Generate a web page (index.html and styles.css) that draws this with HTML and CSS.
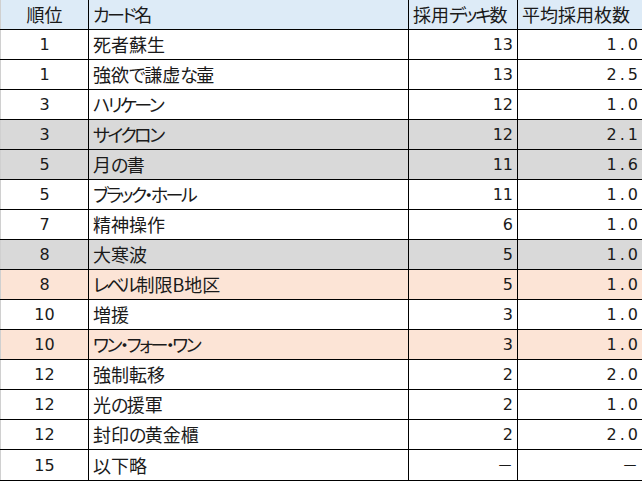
FILE: index.html
```html
<!DOCTYPE html>
<html lang="ja">
<head>
<meta charset="utf-8">
<link rel="stylesheet" href="styles.css">
</head>
<body>
<table class="rank">
  <colgroup>
    <col class="c-rank">
    <col class="c-name">
    <col class="c-deck">
    <col class="c-avg">
  </colgroup>
  <thead>
    <tr class="head">
      <th class="center">順位</th>
      <th><span class="kana">カード</span>名</th>
      <th>採用<span class="kana">デッキ</span>数</th>
      <th>平均採用枚数</th>
    </tr>
  </thead>
  <tbody>
    <tr><td class="center">1</td><td>死者蘇生</td><td class="num">13</td><td class="num avg">1.0</td></tr>
    <tr><td class="center">1</td><td>強欲<span class="hira">で</span>謙虚<span class="hira">な</span>壷</td><td class="num">13</td><td class="num avg">2.5</td></tr>
    <tr><td class="center">3</td><td><span class="kana">ハリケーン</span></td><td class="num">12</td><td class="num avg">1.0</td></tr>
    <tr class="gray"><td class="center">3</td><td><span class="kana">サイクロン</span></td><td class="num">12</td><td class="num avg">2.1</td></tr>
    <tr class="gray"><td class="center">5</td><td>月<span class="hira">の</span>書</td><td class="num">11</td><td class="num avg">1.6</td></tr>
    <tr><td class="center">5</td><td><span class="kana">ブラック・ホール</span></td><td class="num">11</td><td class="num avg">1.0</td></tr>
    <tr><td class="center">7</td><td>精神操作</td><td class="num">6</td><td class="num avg">1.0</td></tr>
    <tr class="gray"><td class="center">8</td><td>大寒波</td><td class="num">5</td><td class="num avg">1.0</td></tr>
    <tr class="peach"><td class="center">8</td><td><span class="kana">レベル</span>制限B地区</td><td class="num">5</td><td class="num avg">1.0</td></tr>
    <tr><td class="center">10</td><td>増援</td><td class="num">3</td><td class="num avg">1.0</td></tr>
    <tr class="peach"><td class="center">10</td><td><span class="kana">ワン・フォー・ワン</span></td><td class="num">3</td><td class="num avg">1.0</td></tr>
    <tr><td class="center">12</td><td>強制転移</td><td class="num">2</td><td class="num avg">2.0</td></tr>
    <tr><td class="center">12</td><td>光<span class="hira">の</span>援軍</td><td class="num">2</td><td class="num avg">1.0</td></tr>
    <tr><td class="center">12</td><td>封印<span class="hira">の</span>黄金櫃</td><td class="num">2</td><td class="num avg">2.0</td></tr>
    <tr><td class="center">15</td><td>以下略</td><td class="num"><span class="dash">－</span></td><td class="num"><span class="dash">－</span></td></tr>
  </tbody>
</table>
</body>
</html>
```

FILE: styles.css
```css
html, body {
  margin: 0;
  padding: 0;
  background: #ffffff;
}

.rank {
  border-collapse: collapse;
  table-layout: fixed;
  width: 642px;
  font-family: "Noto Sans CJK JP", sans-serif;
  font-feature-settings: "palt";
  font-size: 18px;
  color: #1a1a1a;
}

.c-rank { width: 88px; }
.c-name { width: 320px; }
.c-deck { width: 109px; }
.c-avg { width: 125px; }

.rank th,
.rank td {
  height: 29px;
  padding: 0 4px 0 4px;
  border: 1px solid #000000;
  font-weight: normal;
  text-align: left;
  white-space: nowrap;
  overflow: hidden;
  line-height: 29px;
}

.rank th:first-child,
.rank td:first-child {
  border-left: 1px solid #d0d0d0;
}

.rank thead th {
  border-top: none;
  background: #ddebf7;
}

.rank .center {
  text-align: center;
  font-family: "DejaVu Sans", sans-serif;
  font-size: 16px;
}

.rank thead .center {
  font-family: "Noto Sans CJK JP", sans-serif;
  font-size: 18px;
}

.rank .num {
  text-align: right;
  font-family: "DejaVu Sans", sans-serif;
  font-size: 16px;
}

.rank .avg {
  letter-spacing: 3px;
  padding-right: 1px;
}

.rank .dash {
  font-family: "Noto Sans CJK JP", sans-serif;
  font-size: 16px;
}

.kana {
  letter-spacing: -2.5px;
}

.hira {
  letter-spacing: -1.5px;
}

.gray td { background: #d9d9d9; }
.peach td { background: #fce4d6; }
```
